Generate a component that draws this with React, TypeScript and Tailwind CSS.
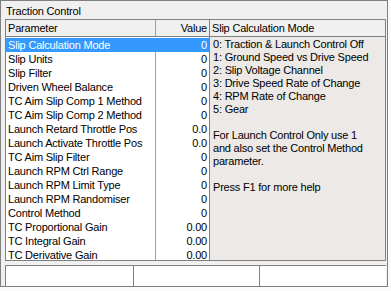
import React from 'react';

interface Param {
  name: string;
  value: string;
}

const params: Param[] = [
  { name: 'Slip Calculation Mode', value: '0' },
  { name: 'Slip Units', value: '0' },
  { name: 'Slip Filter', value: '0' },
  { name: 'Driven Wheel Balance', value: '0' },
  { name: 'TC Aim Slip Comp 1 Method', value: '0' },
  { name: 'TC Aim Slip Comp 2 Method', value: '0' },
  { name: 'Launch Retard Throttle Pos', value: '0.0' },
  { name: 'Launch Activate Throttle Pos', value: '0.0' },
  { name: 'TC Aim Slip Filter', value: '0' },
  { name: 'Launch RPM Ctrl Range', value: '0' },
  { name: 'Launch RPM Limit Type', value: '0' },
  { name: 'Launch RPM Randomiser', value: '0' },
  { name: 'Control Method', value: '0' },
  { name: 'TC Proportional Gain', value: '0.00' },
  { name: 'TC Integral Gain', value: '0.00' },
  { name: 'TC Derivative Gain', value: '0.00' },
];

const helpLines = [
  '0: Traction & Launch Control Off',
  '1: Ground Speed vs Drive Speed',
  '2: Slip Voltage Channel',
  '3: Drive Speed Rate of Change',
  '4: RPM Rate of Change',
  '5: Gear',
  '',
  'For Launch Control Only use 1',
  'and also set the Control Method',
  'parameter.',
  '',
  'Press F1 for more help',
];

export default function App() {
  const selected = 0;

  return (
    <div className="min-h-screen bg-[#fafafa] font-['Liberation_Sans',Arial,sans-serif] text-[11px] tracking-[-0.2px] text-black">
      <div className="w-[388px] h-[287px] border border-[#808080] bg-[#f0f0f0] flex flex-col pl-[4px] pr-[1px]">
        <div className="h-[18px] pt-[2px] leading-[17px] pl-[1px] shrink-0">Traction Control</div>

        <div className="h-[242px] shrink-0 border border-[#808080] flex overflow-hidden">
          {/* parameter table */}
          <div className="w-[204px] shrink-0 flex flex-col border-r border-[#808080] bg-white">
            <div className="h-[17px] shrink-0 flex border-b border-[#808080] bg-[#f0f0f0] leading-[16px]">
              <div className="w-[150px] border-r border-[#a0a0a0] pl-[2px]">Parameter</div>
              <div className="flex-1 text-right pr-[2px]">Value</div>
            </div>
            <div className="flex-1 pt-[1px] overflow-hidden">
              {params.map((p, i) => (
                <div
                  key={p.name}
                  className={
                    i === selected
                      ? 'h-[14px] flex leading-[14px] bg-[#3399ff] text-white'
                      : 'h-[14px] flex leading-[14px]'
                  }
                >
                  <div
                    className={
                      i === selected
                        ? 'w-[150px] border-r border-[#3399ff] pl-[2px] whitespace-nowrap'
                        : 'w-[150px] border-r border-[#a0a0a0] pl-[2px] whitespace-nowrap'
                    }
                  >
                    {p.name}
                  </div>
                  <div className="flex-1 text-right pr-[2px]">{p.value}</div>
                </div>
              ))}
            </div>
          </div>

          {/* help panel */}
          <div className="flex-1 flex flex-col">
            <div className="h-[17px] shrink-0 border-b border-[#808080] leading-[16px] pl-[2px]">
              Slip Calculation Mode
            </div>
            <div className="flex-1 bg-[#ece9e6] pt-[1px] pl-[3px] leading-[13px]">
              {helpLines.map((line, i) => (
                <div key={i} className="h-[13px] whitespace-nowrap">
                  {line}
                </div>
              ))}
            </div>
          </div>
        </div>

        {/* status bar */}
        <div className="mt-[4px] h-[21px] shrink-0 flex">
          <div className="w-[128px] border-t border-l border-[#808080] bg-white" />
          <div className="w-[126px] border-t border-l border-[#808080] bg-white" />
          <div className="flex-1 border-t border-l border-[#808080] bg-white" />
        </div>
      </div>
    </div>
  );
}
